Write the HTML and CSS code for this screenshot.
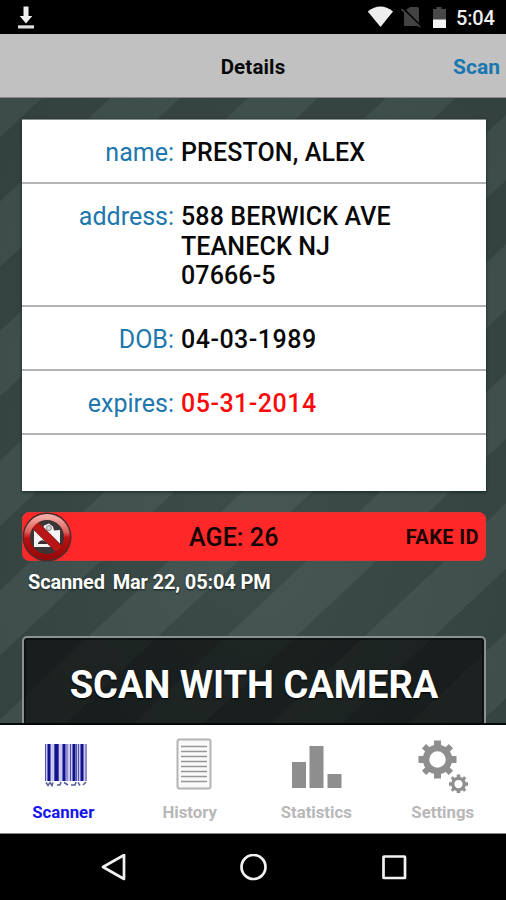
FILE: index.html
```html
<!DOCTYPE html>
<html lang="en">
<head>
<meta charset="utf-8">
<title>Details</title>
<link rel="stylesheet" href="styles.css">
</head>
<body>
<div class="statusbar">
  <svg class="download" width="18" height="24" viewBox="0 0 18 24"><path d="M6.500 .5h5v9.500h3.800L9 17.500 2.700 10h3.800z" fill="#eee"/><path d="M1 19.300h16v3.200H1z" fill="#ddd"/></svg>
  <svg class="indicators" width="84" height="24" viewBox="0 0 84 24">
    <path d="M.8 5.500Q13.500-4.500 26 5.500L13.500 21z" fill="#eee"/>
    <path d="M40 3l3-2h7q2 0 2 2v17H37V6z" fill="#424242"/><path d="M34.500 1.500l19 19" stroke="#000" stroke-width="3"/><path d="M34.500 3l18.500 18" stroke="#4d4d4d" stroke-width="1.600"/>
    <path d="M66 3h3.500V1h5v2H79v11H66z" fill="#484848"/><path d="M66 13.500h13V22H66z" fill="#f5f5f5"/>
  </svg>
  <span class="clock">5:04</span>
</div>
<header class="navbar"><h1 class="title">Details</h1><a class="scan">Scan</a></header>
<main class="content">
  <dl class="card">
    <div class="row"><dt>name:</dt><dd>PRESTON, ALEX</dd></div>
    <div class="row address"><dt>address:</dt><dd>588 BERWICK AVE<br>TEANECK NJ<br>07666-5</dd></div>
    <div class="row"><dt>DOB:</dt><dd class="date">04-03-1989</dd></div>
    <div class="row"><dt>expires:</dt><dd class="date expired">05-31-2014</dd></div>
  </dl>
  <div class="alert">
    <svg class="denied" width="50" height="50" viewBox="0 0 50 50">
      <defs><linearGradient id="ring" x1="0" y1="0" x2="0" y2="1"><stop offset="0" stop-color="#f4aaa5"/><stop offset=".38" stop-color="#dc5c55"/><stop offset=".52" stop-color="#bd1010"/><stop offset="1" stop-color="#980909"/></linearGradient></defs>
      <circle cx="25" cy="25" r="24.500" fill="#4c2c2d"/>
      <circle cx="25" cy="25" r="17" fill="#3d3435"/>
      <path d="M12 18.500l8 0 2-5 5-2 4 3 1 4 6-.5V35H12z" fill="#f4f4f4"/><circle cx="27" cy="16" r="2.500" fill="#d5d5d5" stroke="#888"/>
      <path d="M16 31q4-6 10 1h-10z" fill="#392f30"/>
      <path d="M11.500 11.500l27 27" stroke="#7c2022" stroke-width="9"/>
      <path d="M11 11l28 28" stroke="#b91515" stroke-width="7.500"/>
      <circle cx="25" cy="25" r="20" fill="none" stroke="url(#ring)" stroke-width="6"/>
    </svg>
    <span class="age">AGE: 26</span><span class="fake">FAKE ID</span>
  </div>
  <p class="scanned">Scanned <span>Mar 22, 05:04 PM</span></p>
  <button class="camera"><span>SCAN WITH CAMERA</span></button>
</main>
<nav class="tabs">
  <a class="tab active">
    <svg width="44" height="56" viewBox="0 0 44 56"><path d="M1 7h42v37H1z" fill="#c9c9ee"/><path d="M1.500 7v37M10.500 7v37M14.500 7v37M26.500 7v37M34.500 7v37M42 7v37" stroke="#5050ad" stroke-width="1"/><path d="M5 7v37M12.500 7v37M20 7v37M30 7v37M38 7v37" stroke="#11118e" stroke-width="3"/><path d="M23 7v37M32.500 7v37" stroke="#5656b2"/><path d="M2 45.500l2 3 2-3 2 3 1-3M13 48h3l1-3M20 45.500l4 2.500M27 48h4l1-3M34 45.500l2 3M39 48l3-3" fill="none" stroke="#555a99" stroke-width="1.500"/></svg>
    <span>Scanner</span>
  </a>
  <a class="tab history">
    <svg width="36" height="56" viewBox="0 0 36 56"><rect x="1.500" y="2.500" width="33" height="49" rx="2" fill="#fafafa" stroke="#b4b4b4" stroke-width="2"/><path d="M5 9.500h26M5 14.500h26M5 19.500h26M5 24.500h26M5 29.500h26M5 34.500h26M5 39.500h26M5 44.500h26" stroke="#969696" stroke-width="1.500"/></svg>
    <span>History</span>
  </a>
  <a class="tab statistics">
    <svg width="50" height="56" viewBox="0 0 50 56"><path d="M0 25h14v26H0zM17.500 9h14v42h-14zM35.500 37h14v14h-14z" fill="#8e8e8e"/></svg>
    <span>Statistics</span>
  </a>
  <a class="tab settings">
    <svg width="50" height="56" viewBox="0 0 50 56">
      <defs><g id="gear"><circle r="11.500" fill="none" stroke="#8e8e8e" stroke-width="6.500"/><path d="M-3.500-19h7v6h-7zM-3.500 13h7v6h-7zM-19-3.500h6v7h-6zM13-3.500h6v7h-6z" fill="#8e8e8e"/><path d="M-3-19h6v6h-6zM-3 13h6v6h-6zM-19-3h6v6h-6zM13-3h6v6h-6z" fill="#8e8e8e" transform="rotate(45)"/></g></defs>
      <use href="#gear" transform="translate(19.500 22.500)"/><use href="#gear" transform="translate(40.500 47) scale(.5)"/>
    </svg>
    <span>Settings</span>
  </a>
</nav>
<footer class="system">
  <svg width="28" height="28" viewBox="0 0 28 28"><path d="M3 13L24 1v24z"/></svg>
  <svg width="28" height="28" viewBox="0 0 28 28"><circle cx="13.500" cy="13" r="12"/></svg>
  <svg width="28" height="28" viewBox="0 0 28 28"><rect x="3.500" y="2.500" width="21.500" height="21.500" rx=".5"/></svg>
</footer>
</body>
</html>
```
FILE: styles.css
```css
* { box-sizing: border-box; }
body { margin: 0; width: 506px; height: 900px; overflow: hidden; background: #000; font-family: Roboto, "Liberation Sans", sans-serif; font-weight: 500; display: flex; flex-direction: column; }
svg { display: block; flex: none; }
.statusbar { height: 34px; flex: none; display: flex; align-items: flex-start; padding: 6px 12px 0 17px; }
.indicators { margin-left: auto; margin-right: 5px; }
.clock { color: #eee; font-size: 20px; line-height: 24px; width: 38px; white-space: nowrap; letter-spacing: -.2px; }
.navbar { height: 64px; flex: none; background: #c1c1c1; border-bottom: 1px solid #858a89; display: grid; grid-template-columns: 1fr auto 1fr; align-items: center; padding: 2px 6px 0 6px; }
.title { grid-column: 2; margin: 0; font-size: 20.5px; line-height: 30px; font-weight: 700; letter-spacing: .15px; color: #080808; }
.scan { justify-self: end; font-size: 21px; line-height: 30px; font-weight: 700; color: #1877b0; }
.content { height: 627px; flex: none; overflow: hidden; padding: 21px 20px 0 22px; border-bottom: 2px solid #050808;
  background: radial-gradient(ellipse at 50% 65%, rgba(90,120,115,.14), rgba(20,35,33,.12) 100%), repeating-linear-gradient(136.8deg, #42514e 0, #42514e 28.2px, #374542 29.2px, #374542 75px, #42514e 76px, #42514e 94.4px); }
.card { margin: 0; height: 372px; background: #fff; border-top: 1px solid #8c9291; box-shadow: 0 1px 3px rgba(0,25,22,.7); }
.row { height: 64px; border-bottom: 2px solid #b4b4b4; display: flex; padding-top: 18px; gap: 7px; }
.row.address { height: 123px; }
dt { width: 152px; text-align: right; color: #2077ad; font-size: 25px; line-height: 29.5px; font-weight: 400; }
dd { margin: 0; color: #080808; font-size: 25px; line-height: 29.5px; letter-spacing: .13px; white-space: nowrap; }
dd.date { letter-spacing: .5px; }
dd.expired { color: #fb0a0a; }
.alert { height: 49px; margin-top: 21px; background: #ff2828; border-radius: 7px; border: 1px solid #dc3535; display: grid; grid-template-columns: 166px 1fr auto; align-items: center; padding: 0 6px 1px 0; }
.denied { margin: -1px 0 -1px -1px; }
.age { margin-top: 2px; font-size: 25px; line-height: 30px; letter-spacing: .1px; color: #100404; }
.fake { font-size: 20px; line-height: 30px; font-weight: 700; letter-spacing: .4px; color: #200303; }
.scanned { margin: 9px 0 0 6px; font-size: 20px; line-height: 25px; font-weight: 700; letter-spacing: -.15px; color: #fff; text-shadow: 0 1px 2px #111c1a; white-space: pre; }
.scanned span { margin-left: 3px; }
.camera { display: block; margin: 41px 0 0; padding: 0; width: 464px; height: 120px; border: 2px solid #8b9190; border-radius: 5px; background: rgba(0,0,0,.56); box-shadow: inset 0 0 0 2px rgba(0,0,0,.45); color: #fff; font: 700 38px/94px Roboto, sans-serif; text-align: center; text-shadow: 0 1px 2px #000; }
.camera span { display: block; height: 116px; }
.tabs { height: 109px; flex: none; background: #fff; border-bottom: 1px solid #888; display: grid; grid-template-columns: repeat(4, 1fr); }
.tab { display: flex; flex-direction: column; align-items: center; padding-top: 12px; color: #b8b8b8; font-size: 16.8px; line-height: 24px; font-weight: 700; gap: 7px; }
.tab.active { color: #1515ef; }
.tab svg { margin-left: 6px; }
.tab.history svg { margin-left: 8px; }
.tab.statistics svg { margin-left: 2px; }
.tab.settings svg { margin-left: 0; }
.system { height: 67px; flex: none; display: flex; justify-content: space-between; padding: 20px 98px 0 100px; }
.system svg { fill: none; stroke: #f2f2f2; stroke-width: 2.7; stroke-linejoin: round; }
```
